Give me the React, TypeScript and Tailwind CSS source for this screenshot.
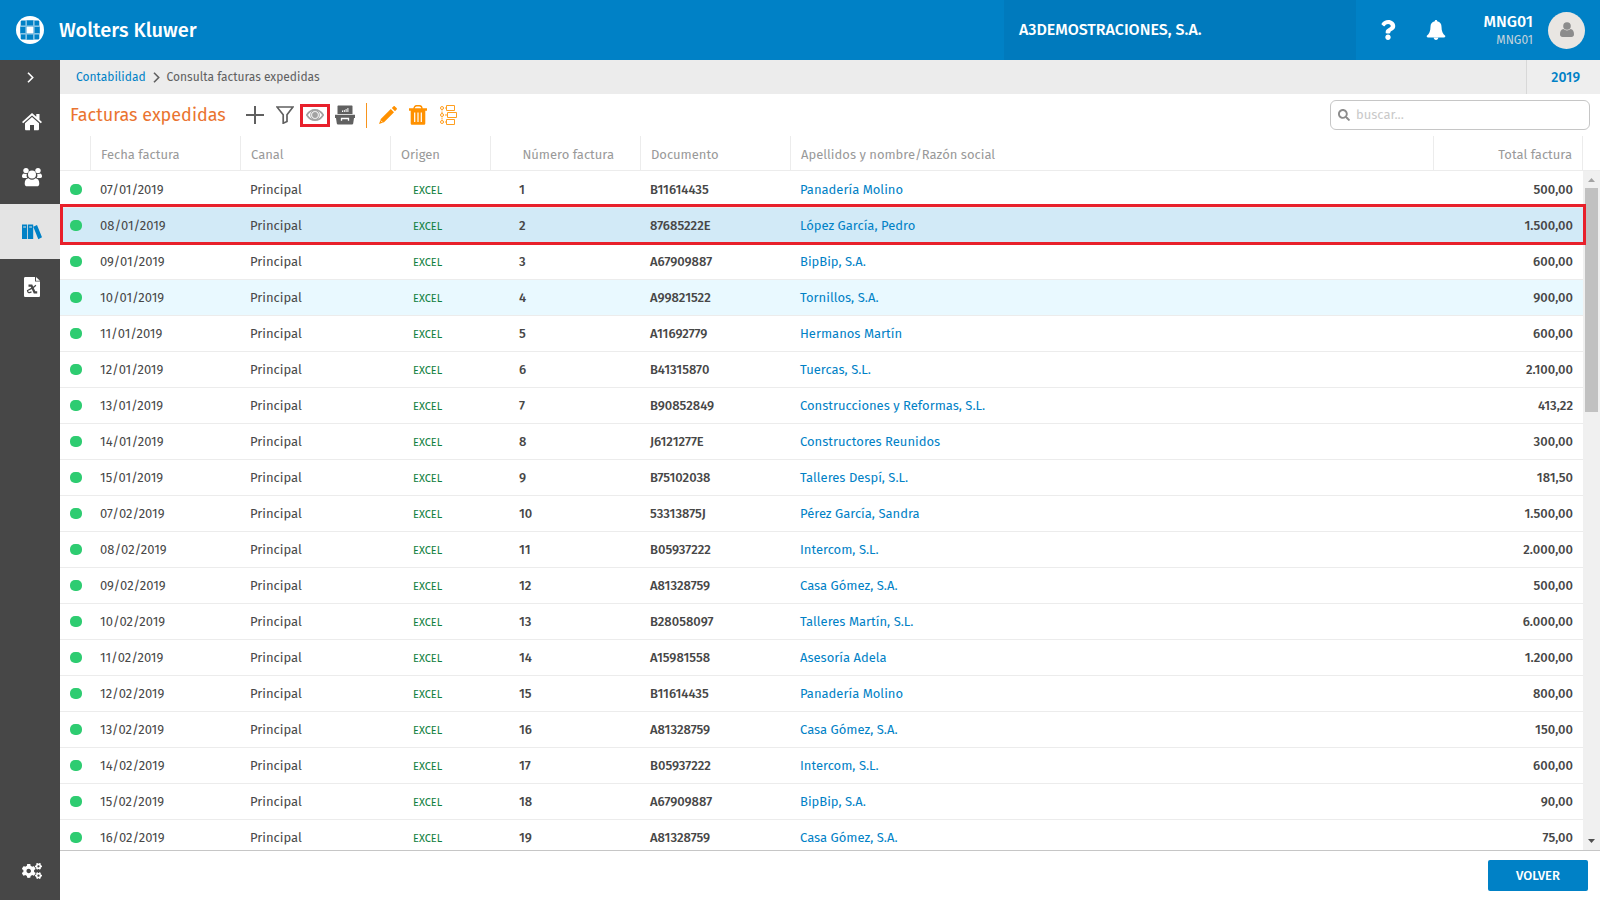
import type { ReactNode } from "react";
import { FaCogs, FaQuestion, FaSearch } from "react-icons/fa";

type Invoice = {
  date: string;
  number: number;
  document: string;
  name: string;
  total: string;
  state?: "selected" | "hover";
};

const invoices: Invoice[] = [
  { date: "07/01/2019", number: 1, document: "B11614435", name: "Panadería Molino", total: "500,00" },
  { date: "08/01/2019", number: 2, document: "87685222E", name: "López García, Pedro", total: "1.500,00", state: "selected" },
  { date: "09/01/2019", number: 3, document: "A67909887", name: "BipBip, S.A.", total: "600,00" },
  { date: "10/01/2019", number: 4, document: "A99821522", name: "Tornillos, S.A.", total: "900,00", state: "hover" },
  { date: "11/01/2019", number: 5, document: "A11692779", name: "Hermanos Martín", total: "600,00" },
  { date: "12/01/2019", number: 6, document: "B41315870", name: "Tuercas, S.L.", total: "2.100,00" },
  { date: "13/01/2019", number: 7, document: "B90852849", name: "Construcciones y Reformas, S.L.", total: "413,22" },
  { date: "14/01/2019", number: 8, document: "J6121277E", name: "Constructores Reunidos", total: "300,00" },
  { date: "15/01/2019", number: 9, document: "B75102038", name: "Talleres Despí, S.L.", total: "181,50" },
  { date: "07/02/2019", number: 10, document: "53313875J", name: "Pérez García, Sandra", total: "1.500,00" },
  { date: "08/02/2019", number: 11, document: "B05937222", name: "Intercom, S.L.", total: "2.000,00" },
  { date: "09/02/2019", number: 12, document: "A81328759", name: "Casa Gómez, S.A.", total: "500,00" },
  { date: "10/02/2019", number: 13, document: "B28058097", name: "Talleres Martín, S.L.", total: "6.000,00" },
  { date: "11/02/2019", number: 14, document: "A15981558", name: "Asesoría Adela", total: "1.200,00" },
  { date: "12/02/2019", number: 15, document: "B11614435", name: "Panadería Molino", total: "800,00" },
  { date: "13/02/2019", number: 16, document: "A81328759", name: "Casa Gómez, S.A.", total: "150,00" },
  { date: "14/02/2019", number: 17, document: "B05937222", name: "Intercom, S.L.", total: "600,00" },
  { date: "15/02/2019", number: 18, document: "A67909887", name: "BipBip, S.A.", total: "90,00" },
  { date: "16/02/2019", number: 19, document: "A81328759", name: "Casa Gómez, S.A.", total: "75,00" },
];

function Logo() {
  return (
    <svg width="28" height="28" viewBox="0 0 28 28" aria-hidden="true">
      <circle cx="14" cy="14" r="14" fill="#fff" />
      <path
        d="M5.500 4.500h4.200v5.200H4.700V5.300zM10.700 4.200h6.600v5.500h-6.600zM18.300 4.500h4.200l.8.800v4.400h-5zM4.200 10.700h5.500v6.600H4.200zM18.300 10.700h5.500v6.600h-5.500zM4.700 18.300h5v5.200H5.500l-.8-.8zM10.700 18.300h6.600v5.500h-6.600zM18.300 18.300h5v4.400l-.8.8h-4.200z"
        fill="#0081c6"
      />
      <path d="M10.200 4v20M17.800 4v20M4 10.200h20M4 17.800h20" stroke="#6fb8e0" strokeWidth="1" />
      <path d="M11 11h6v6h-6z" fill="#fff" />
    </svg>
  );
}

function HomeIcon() {
  return (
    <svg width="20" height="18" viewBox="0 0 20 18" fill="currentColor" aria-hidden="true">
      <path d="M10 0 0 9l1.200 1.300L10 2.500l8.800 7.800L20 9l-2.500-2.300V1h-3.200v2.800z" />
      <path d="M10 4 3 10.200V16c0 .8.5 1.300 1.200 1.300H8V12h4v5.300h3.800c.7 0 1.200-.5 1.200-1.300v-5.800z" />
    </svg>
  );
}

function PeopleIcon() {
  return (
    <svg width="20" height="20" viewBox="0 0 20 20" fill="currentColor" aria-hidden="true">
      <circle cx="4" cy="3.600" r="2.700" />
      <circle cx="16" cy="3.600" r="2.700" />
      <path d="M2 6.500C.6 6.700 0 7.800 0 9.300c0 1.200.5 1.700 1.500 1.700h3.700A5 5 0 0 1 4.800 7C3.800 7.200 2.800 7 2 6.500zM18 6.500c1.400.2 2 1.300 2 2.800 0 1.200-.5 1.700-1.500 1.700h-3.700a5 5 0 0 0 .4-4c1 .2 2 0 2.800-.5z" />
      <circle cx="10" cy="7.500" r="4" />
      <path d="M6.500 11.300C4 11.300 2.700 13.500 2.700 16.700c0 1.700 1 2.600 2.500 2.600h9.600c1.500 0 2.500-.9 2.500-2.600 0-3.200-1.300-5.400-3.800-5.400a5.300 5.300 0 0 1-7 0z" />
    </svg>
  );
}

function BooksIcon() {
  return (
    <svg width="20" height="16" viewBox="0 0 20 16" aria-hidden="true">
      <path d="M0 .5h5.200v14.500H0zM6 .5h5.200v14.500H6zM11.300 2.700 15 1l5 12.300-3.700 1.900z" fill="#0081c6" />
      <path d="M1.200 3h2.800M7.200 3h2.800" stroke="#e4e4e4" strokeWidth="1" />
    </svg>
  );
}

function ReportIcon() {
  return (
    <svg width="16" height="20" viewBox="0 0 16 20" aria-hidden="true">
      <path d="M1.500 0H11v4.500h5v14c0 1-.5 1.500-1.500 1.500h-13C.5 20 0 19.500 0 18.500v-17C0 .5.500 0 1.500 0z" fill="#fff" />
      <path d="M12 0v3.700h4z" fill="#fff" />
      <path d="M4.500 8.700h3l3 6.600h2.700" fill="none" stroke="#474747" strokeWidth="2.200" />
      <path d="M11.700 8c-.5 2-5 4-8.200 5.500 0 2.500 2 2.800 4 1.300" fill="none" stroke="#474747" strokeWidth="1.200" />
    </svg>
  );
}

function BellIcon() {
  return (
    <svg width="20" height="20" viewBox="0 0 20 20" fill="#fff" aria-hidden="true">
      <path d="M10 0c.8 0 1.200.5 1.200 1.300 3 .7 4.300 2.700 4.300 5.500 0 4.500 1.300 7.200 3.700 9 .3 1-.2 1.700-1.200 1.700H2c-1 0-1.500-.7-1.200-1.700 2.400-1.800 3.700-4.500 3.700-9 0-2.800 1.300-4.800 4.300-5.500C8.800.5 9.200 0 10 0z" />
      <path d="M7.700 17.500h4.600c0 1.500-1 2.500-2.300 2.500s-2.300-1-2.300-2.500z" />
    </svg>
  );
}

function UserIcon() {
  return (
    <svg width="14" height="16" viewBox="0 0 14 16" fill="currentColor" aria-hidden="true">
      <circle cx="7" cy="4" r="3.800" />
      <path d="M3.500 7C1 7.200 0 9.500 0 12.300 0 14 1 15 2.600 15h8.800c1.600 0 2.600-1 2.600-2.700C14 9.500 13 7.200 10.500 7a5 5 0 0 1-7 0z" />
    </svg>
  );
}

function PlusIcon() {
  return (
    <svg width="18" height="18" viewBox="0 0 18 18" aria-hidden="true">
      <path d="M9 0v18M0 9h18" stroke="#606060" strokeWidth="2" />
    </svg>
  );
}

function FilterIcon() {
  return (
    <svg width="18" height="18" viewBox="0 0 18 18" fill="none" aria-hidden="true">
      <path d="M1 1h16l-6 7.700V15.500l-3.800 1.700V8.700z" stroke="#606060" strokeWidth="1.700" />
    </svg>
  );
}

function EyeIcon() {
  return (
    <svg width="18" height="12" viewBox="0 0 18 12" fill="none" className="shrink-0" aria-hidden="true">
      <path d="M.8 6C3 2.500 5.800.9 9 .9s6 1.600 8.200 5.100C15 9.500 12.200 11.100 9 11.100S3 9.500.8 6z" stroke="#a2a2a2" strokeWidth="1.700" />
      <circle cx="9" cy="6" r="4.300" stroke="#a2a2a2" strokeWidth="1" />
      <circle cx="9" cy="6" r="2.900" fill="#a2a2a2" />
    </svg>
  );
}

function ArchiveIcon() {
  return (
    <svg width="20" height="20" viewBox="0 0 20 20" aria-hidden="true">
      <path d="M3.500.5h13c.7 0 1 .4 1 1V9h-15V1.500c0-.6.300-1 1-1z" fill="#606060" />
      <path d="M0 9.700h20v3.300h-1l-.8 5.500c-.1.700-.5 1-1.200 1H3c-.7 0-1.100-.3-1.200-1L1 13H0z" fill="#606060" />
      <path d="M7.500 7V5.500M9.300 7V5M11.100 7V4M12.900 7V3" stroke="#fff" strokeWidth="1" />
      <path d="M6.500 15.800v-2.300h7v2.300" fill="none" stroke="#fff" strokeWidth="1.300" />
    </svg>
  );
}

function PencilIcon() {
  return (
    <svg width="18" height="18" viewBox="0 0 18 18" fill="#ff9100" aria-hidden="true">
      <path d="M11.800 3 15 6.200 5 16.200l-5 1.800 1.800-5zM12.800 2l1.600-1.600c.5-.5 1-.5 1.500 0l1.700 1.700c.5.500.5 1 0 1.500L16 5.200z" />
      <path d="m1.800 14.600 1.700 1.700" stroke="#fff" strokeWidth=".8" />
    </svg>
  );
}

function TrashIcon() {
  return (
    <svg width="18" height="20" viewBox="0 0 18 20" aria-hidden="true">
      <path d="M5 4c0-2 1-3.200 2.500-3.200h3C12 .8 13 2 13 4" fill="none" stroke="#ff9100" strokeWidth="1.400" />
      <path d="M0 3.300h18v2.400H0zM1.700 5.500h14.600v12.700c0 1-.6 1.600-1.600 1.600H3.300c-1 0-1.600-.6-1.600-1.600z" fill="#ff9100" />
      <path d="M5.700 7.500v9.500M9 7.500v9.500M12.300 7.500v9.500" stroke="#fff" strokeWidth="1.200" />
    </svg>
  );
}

function TreeIcon() {
  return (
    <svg width="17" height="20" viewBox="0 0 17 20" fill="none" stroke="#ff9f20" strokeWidth="1" aria-hidden="true">
      <path d="M2 3.500v13M2 3h5M2 10h5M2 17h5" strokeDasharray="2 1" />
      <g fill="#fff">
        <circle cx="2" cy="3" r="1.500" />
        <circle cx="2" cy="10" r="1.500" />
        <circle cx="2" cy="17" r="1.500" />
        <path d="M6.500.5h8v5h-8zM7.500 7.500h9v5h-9zM6.500 14.500h8v5h-8z" />
      </g>
    </svg>
  );
}

function Chevron() {
  return (
    <svg width="7" height="11" viewBox="0 0 7 11" fill="none" aria-hidden="true">
      <path d="m1 .8 4.700 4.700L1 10.200" stroke="currentColor" strokeWidth="1.600" />
    </svg>
  );
}

function ToolButton({ label, children, marked = false }: { label: string; children: ReactNode; marked?: boolean }) {
  return (
    <button
      type="button"
      aria-label={label}
      className={
        marked
          ? "flex h-[23px] w-[30px] items-center justify-center border-3 border-[#e8202b]"
          : "flex h-[23px] w-[30px] items-center justify-center"
      }
    >
      {children}
    </button>
  );
}

function SideLink({ label, children, active = false }: { label: string; children: ReactNode; active?: boolean }) {
  return (
    <a
      href="#"
      aria-label={label}
      className={
        active
          ? "flex h-[55px] items-center justify-center bg-[#e4e4e4] pl-1"
          : "flex h-[55px] items-center justify-center pl-1 text-white"
      }
    >
      {children}
    </a>
  );
}

const headCell = "h-[35px] border-r border-b border-[#ececec] p-0 px-[10px] pt-1 text-left font-normal";
const headCellRight = "h-[35px] border-r border-b border-[#ececec] p-0 px-[10px] pt-1 text-right font-normal";
const headCellNumber = "h-[35px] border-r border-b border-[#ececec] p-0 pt-1 pr-[26px] text-right font-normal";

export default function App() {
  return (
    <div className="flex h-screen flex-col overflow-hidden bg-white font-['Fira_Sans','Noto_Sans',sans-serif] text-[13px] text-[#474747]">
      <header className="flex h-[60px] shrink-0 items-center bg-[#0081c6] text-white">
        <a href="#" className="flex items-center gap-[15px] pl-4 text-[20px] font-medium">
          <Logo />
          Wolters Kluwer
        </a>
        <div className="ml-auto flex h-full w-[352px] items-center bg-[#007abd] pl-[15px] text-[16px] font-medium">
          A3DEMOSTRACIONES, S.A.
        </div>
        <button type="button" aria-label="Ayuda" className="ml-5 flex w-6 justify-center">
          <FaQuestion size={20} />
        </button>
        <button type="button" aria-label="Notificaciones" className="ml-6 flex w-6 justify-center">
          <BellIcon />
        </button>
        <div className="w-[85px] pt-[2px] text-right">
          <div className="text-[16px] leading-[18px] font-medium">MNG01</div>
          <div className="text-[12px] leading-[19px] text-[#c5d3dc]">MNG01</div>
        </div>
        <button
          type="button"
          aria-label="Usuario"
          className="mr-[15px] ml-[15px] flex h-[37px] w-[37px] items-center justify-center rounded-full bg-[#e9e6e2] text-[#8c8c8c]"
        >
          <UserIcon />
        </button>
      </header>

      <div className="flex min-h-0 flex-1">
        <nav className="flex w-[60px] shrink-0 flex-col bg-[#474747]">
          <button type="button" aria-label="Expandir menú" className="flex h-[34px] items-center justify-center text-white">
            <Chevron />
          </button>
          <SideLink label="Inicio"><HomeIcon /></SideLink>
          <SideLink label="Clientes"><PeopleIcon /></SideLink>
          <SideLink label="Contabilidad" active><BooksIcon /></SideLink>
          <SideLink label="Informes"><ReportIcon /></SideLink>
          <div className="mt-auto pb-[2px]">
            <SideLink label="Configuración"><FaCogs size={20} /></SideLink>
          </div>
        </nav>

        <main className="flex min-w-0 flex-1 flex-col">
          <div className="flex h-[34px] shrink-0 items-center bg-[#ececec]">
            <nav className="flex items-center gap-[7px] pl-4 text-[12px] text-[#606060]">
              <a href="#" className="text-[#0081c6]">Contabilidad</a>
              <Chevron />
              <span>Consulta facturas expedidas</span>
            </nav>
            <button
              type="button"
              className="ml-auto flex h-full w-[74px] items-center justify-end border-l border-[#d8d8d8] bg-[#eeeeee] pr-5 text-[14px] font-medium text-[#0081c6]"
            >
              2019
            </button>
          </div>

          <div className="flex h-[42px] shrink-0 items-center pr-[10px] pl-[10px]">
            <h1 className="w-[170px] text-[18px] whitespace-nowrap text-[#ea7430]">Facturas expedidas</h1>
            <div className="flex items-center">
              <ToolButton label="Nuevo"><PlusIcon /></ToolButton>
              <ToolButton label="Filtrar"><FilterIcon /></ToolButton>
              <ToolButton label="Ver" marked><EyeIcon /></ToolButton>
              <ToolButton label="Archivar"><ArchiveIcon /></ToolButton>
              <div className="mr-[6px] ml-[6px] h-[25px] w-px bg-[#f7941d]" />
              <ToolButton label="Editar"><PencilIcon /></ToolButton>
              <ToolButton label="Eliminar"><TrashIcon /></ToolButton>
              <ToolButton label="Agrupar"><TreeIcon /></ToolButton>
            </div>
            <label className="ml-auto flex h-[30px] w-[260px] items-center gap-[6px] rounded-md border border-[#c6c6c6] px-[7px] text-[#8c8c8c]">
              <FaSearch size={12} />
              <input
                type="search"
                aria-label="buscar"
                placeholder="buscar..."
                className="min-w-0 flex-1 text-[13px] outline-none placeholder:text-[#c9c9c9]"
              />
            </label>
          </div>

          <div className="flex min-h-0 flex-1 items-start overflow-hidden">
            <table className="w-full min-w-0 flex-1 table-fixed border-separate border-spacing-0">
              <colgroup>
                <col className="w-[31px]" />
                <col className="w-[150px]" />
                <col className="w-[150px]" />
                <col className="w-[100px]" />
                <col className="w-[150px]" />
                <col className="w-[150px]" />
                <col />
                <col className="w-[149px]" />
              </colgroup>
              <thead className="text-[#999999]">
                <tr>
                  <th className={headCell} aria-label="Estado" />
                  <th className={headCell}>Fecha factura</th>
                  <th className={headCell}>Canal</th>
                  <th className={headCell}>Origen</th>
                  <th className={headCellNumber}>Número factura</th>
                  <th className={headCell}>Documento</th>
                  <th className={headCell}>Apellidos y nombre/Razón social</th>
                  <th className={headCellRight}>Total factura</th>
                </tr>
              </thead>
              <tbody className="[&_td]:h-[36px] [&_td]:border-t [&_td]:border-[#ececec] [&_td]:p-0 [&_td]:pr-[10px] [&_td]:pl-[9px] [&>tr:first-child>td]:border-transparent">
                {invoices.map((row) => (
                  <tr
                    key={row.number}
                    className={
                      row.state === "selected"
                        ? "relative bg-[#d2eaf7]"
                        : row.state === "hover"
                          ? "bg-[#e9f9ff]"
                          : "bg-white"
                    }
                  >
                    <td>
                      <span className="ml-px block h-[11px] w-3 rounded-[5px] bg-[#2ecc71]" />
                      {row.state === "selected" && (
                        <span className="pointer-events-none absolute -top-[3px] -right-[3px] -bottom-[2px] left-0 z-10 border-3 border-[#e8202b]" />
                      )}
                    </td>
                    <td>{row.date}</td>
                    <td>Principal</td>
                    <td><span className="pl-[13px] text-[11px] text-[#0f8040]">EXCEL</span></td>
                    <td><span className="pl-[19px] font-medium">{row.number}</span></td>
                    <td className="font-medium">{row.document}</td>
                    <td><a href="#" className="text-[#0081c6]">{row.name}</a></td>
                    <td className="text-right font-medium">{row.total}</td>
                  </tr>
                ))}
              </tbody>
            </table>
            <div className="flex w-[17px] shrink-0 flex-col self-stretch">
              <div className="h-[35px] shrink-0 border-b border-[#ececec]" />
              <div className="flex min-h-0 flex-1 flex-col items-center bg-[#f0f0f0]">
                <svg width="7" height="17" viewBox="0 0 7 17" className="shrink-0" aria-hidden="true">
                  <path d="M3.500 7 7 11H0z" fill="#a3a3a3" />
                </svg>
                <div className="h-[33%] w-[13px] bg-[#c1c1c1]" />
                <svg width="7" height="17" viewBox="0 0 7 17" className="mt-auto shrink-0" aria-hidden="true">
                  <path d="M0 6h7l-3.500 4z" fill="#505050" />
                </svg>
              </div>
            </div>
          </div>

          <footer className="flex h-[50px] shrink-0 items-center justify-end border-t border-[#c6c6c6] pr-3">
            <button type="button" className="h-[31px] w-[100px] rounded-xs bg-[#0081c6] font-medium text-white">
              VOLVER
            </button>
          </footer>
        </main>
      </div>
    </div>
  );
}
